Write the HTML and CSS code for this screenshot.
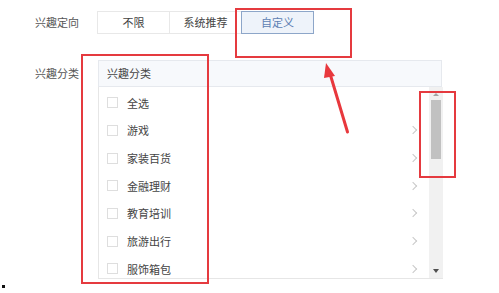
FILE: index.html
```html
<!DOCTYPE html>
<html>
<head>
<meta charset="utf-8">
<link rel="stylesheet" href="styles.css">
</head>
<body>
<div class="page">
  <div class="row row-top">
    <div class="label">兴趣定向</div>
    <div class="tabs">
      <div class="tab">不限</div>
      <div class="tab">系统推荐</div>
      <div class="tab active">自定义</div>
    </div>
  </div>
  <div class="row row-cat">
    <div class="label label-cat">兴趣分类</div>
    <div class="panel">
      <div class="panel-head">兴趣分类</div>
      <div class="panel-body">
        <div class="list">
          <div class="item"><span class="cb"></span><span class="txt">全选</span></div>
          <div class="item"><span class="cb"></span><span class="txt">游戏</span><span class="chev"></span></div>
          <div class="item"><span class="cb"></span><span class="txt">家装百货</span><span class="chev"></span></div>
          <div class="item"><span class="cb"></span><span class="txt">金融理财</span><span class="chev"></span></div>
          <div class="item"><span class="cb"></span><span class="txt">教育培训</span><span class="chev"></span></div>
          <div class="item"><span class="cb"></span><span class="txt">旅游出行</span><span class="chev"></span></div>
          <div class="item"><span class="cb"></span><span class="txt">服饰箱包</span><span class="chev"></span></div>
        </div>
        <div class="scrollbar">
          <span class="sb-up"></span>
          <span class="sb-thumb"></span>
          <span class="sb-down"></span>
        </div>
      </div>
    </div>
  </div>
  <div class="dot"></div>

  <div class="mark mark-tab"></div>
  <div class="mark mark-list"></div>
  <div class="mark mark-scroll"></div>
  <svg class="arrow" width="499" height="293" viewBox="0 0 499 293">
    <line x1="347.5" y1="132" x2="329.5" y2="72" stroke="#e8383d" stroke-width="3" stroke-linecap="round"/>
    <polygon points="326,63 335,76 324,78" fill="#e8383d"/>
  </svg>
</div>
</body>
</html>
```

FILE: styles.css
```css
html, body {
  margin: 0;
  padding: 0;
  background: #ffffff;
}
.page {
  position: relative;
  width: 499px;
  height: 293px;
  overflow: hidden;
  padding-top: 11px;
  box-sizing: border-box;
  font-family: "Noto Sans CJK SC", "Noto Sans", sans-serif;
  font-size: 11px;
  color: #444;
}
.row {
  display: flex;
  align-items: flex-start;
}
.label {
  width: 63px;
  padding-left: 35px;
  flex: none;
  color: #555;
  line-height: 23px;
}
.label-cat {
  line-height: 27px;
}
.tabs {
  display: flex;
}
.tab {
  width: 73px;
  height: 23px;
  box-sizing: border-box;
  border: 1px solid #e8e8e8;
  margin-left: -1px;
  text-align: center;
  line-height: 21px;
  color: #444;
  background: #fff;
}
.tab.active {
  border-color: #8da6c9;
  background: #eef3fa;
  color: #5d7fb3;
  position: relative;
}
.row-cat {
  margin-top: 26px;
}
.panel {
  width: 345px;
  flex: none;
}
.panel-head {
  height: 27px;
  box-sizing: border-box;
  border: 1px solid #e6e9ee;
  background: #f7f9fc;
  padding-left: 8px;
  line-height: 25px;
  color: #444;
  margin-right: 1px;
}
.panel-body {
  display: flex;
  height: 192px;
  box-sizing: border-box;
  border-left: 1px solid #e6e6e6;
  border-bottom: 1px solid #e6e6e6;
}
.list {
  flex: 1;
  overflow: hidden;
  padding-top: 2px;
}
.item {
  display: flex;
  align-items: center;
  height: 27.67px;
  padding-left: 8px;
  padding-right: 13px;
}
.cb {
  width: 11px;
  height: 11px;
  box-sizing: border-box;
  border: 1px solid #dedede;
  background: #fff;
  margin-right: 9px;
  flex: none;
}
.txt {
  flex: 1;
  color: #444;
}
.chev {
  width: 5px;
  height: 5px;
  border-top: 1px solid #c8c8c8;
  border-right: 1px solid #c8c8c8;
  transform: rotate(45deg);
  flex: none;
}
.scrollbar {
  width: 14px;
  flex: none;
  background: #f1f1f1;
  display: flex;
  flex-direction: column;
  align-items: center;
  padding-top: 6px;
  box-sizing: border-box;
}
.sb-up {
  width: 0;
  height: 0;
  border-left: 3px solid transparent;
  border-right: 3px solid transparent;
  border-bottom: 3px solid #a3a3a3;
}
.sb-thumb {
  width: 10px;
  height: 59px;
  background: #c1c1c1;
  margin-top: 4px;
}
.sb-down {
  width: 0;
  height: 0;
  border-left: 3.5px solid transparent;
  border-right: 3.5px solid transparent;
  border-top: 4px solid #505050;
  margin-top: auto;
  margin-bottom: 5px;
}
.dot {
  width: 3px;
  height: 3px;
  background: #111;
  margin-left: 2px;
  margin-top: 6px;
}
.mark {
  position: absolute;
  box-sizing: border-box;
  border: 2px solid #e53a3f;
}
.mark-tab {
  left: 235px;
  top: 8px;
  width: 117px;
  height: 50px;
}
.mark-list {
  left: 81px;
  top: 54px;
  width: 128px;
  height: 230px;
}
.mark-scroll {
  left: 419px;
  top: 91px;
  width: 37px;
  height: 87px;
}
.arrow {
  position: absolute;
  left: 0;
  top: 0;
  pointer-events: none;
}
```
